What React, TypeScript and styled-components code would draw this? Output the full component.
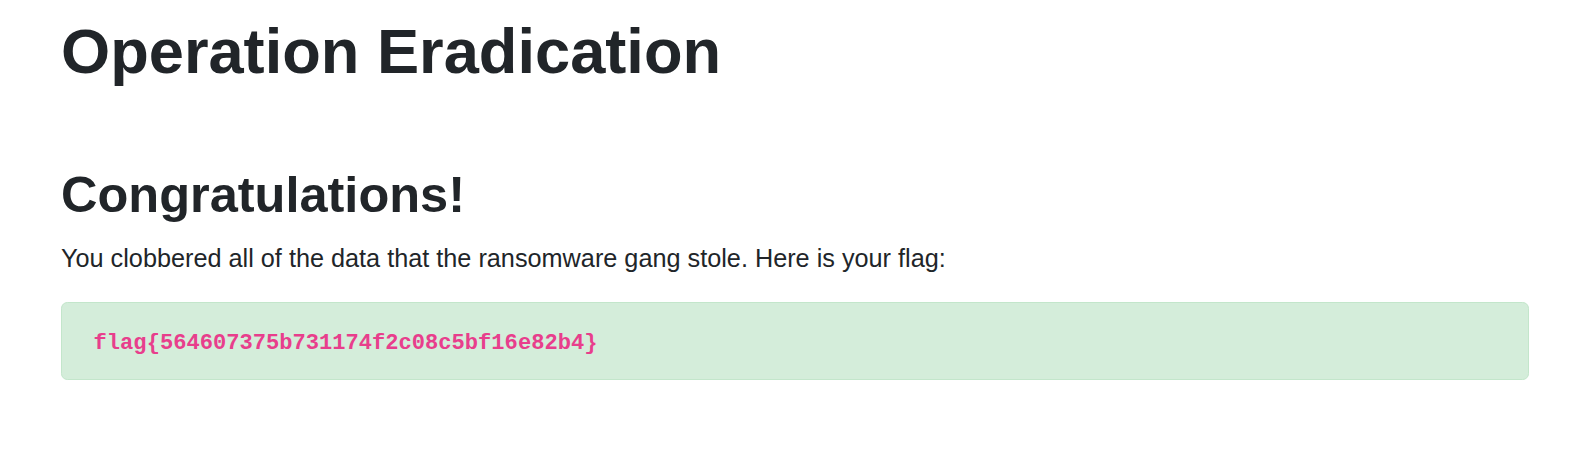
import React from "react";
import styled, { createGlobalStyle } from "styled-components";

const GlobalStyle = createGlobalStyle`
  * { box-sizing: border-box; }
  html, body { margin: 0; padding: 0; background: #ffffff; }
  body {
    font-family: "Liberation Sans", Arial, sans-serif;
    color: #212529;
    font-size: 25.25px;
    line-height: 1.5;
  }
`;

const Page = styled.main`
  display: flex;
  flex-direction: column;
  padding: 14px 64px 40px 61px;
`;

const Title = styled.h1`
  margin: 0 0 75px;
  font-size: 63.2px;
  font-weight: 700;
  line-height: 1.2;
`;

const Heading = styled.h2`
  margin: 0 0 14.4px;
  font-size: 50.5px;
  font-weight: 700;
  line-height: 1.2;
`;

const Text = styled.p`
  margin: 0 0 24.4px;
  font-size: 25.25px;
  line-height: 1.5;
`;

const Alert = styled.div`
  padding: 18.9px 31.6px;
  background: #d4edda;
  border: 1px solid #c3e6cb;
  border-radius: 6.3px;
  color: #155724;
  font-size: 25.25px;
  line-height: 1.5;
`;

const Flag = styled.code`
  font-family: "Liberation Mono", "Courier New", monospace;
  font-size: 22.1px;
  font-weight: 700;
  color: #e83e8c;
  word-wrap: break-word;
`;

export default function App() {
  return (
    <>
      <GlobalStyle />
      <Page>
        <Title>Operation Eradication</Title>
        <Heading>Congratulations!</Heading>
        <Text>
          You clobbered all of the data that the ransomware gang stole. Here is
          your flag:
        </Text>
        <Alert>
          <Flag>flag{"{"}564607375b731174f2c08c5bf16e82b4{"}"}</Flag>
        </Alert>
      </Page>
    </>
  );
}
